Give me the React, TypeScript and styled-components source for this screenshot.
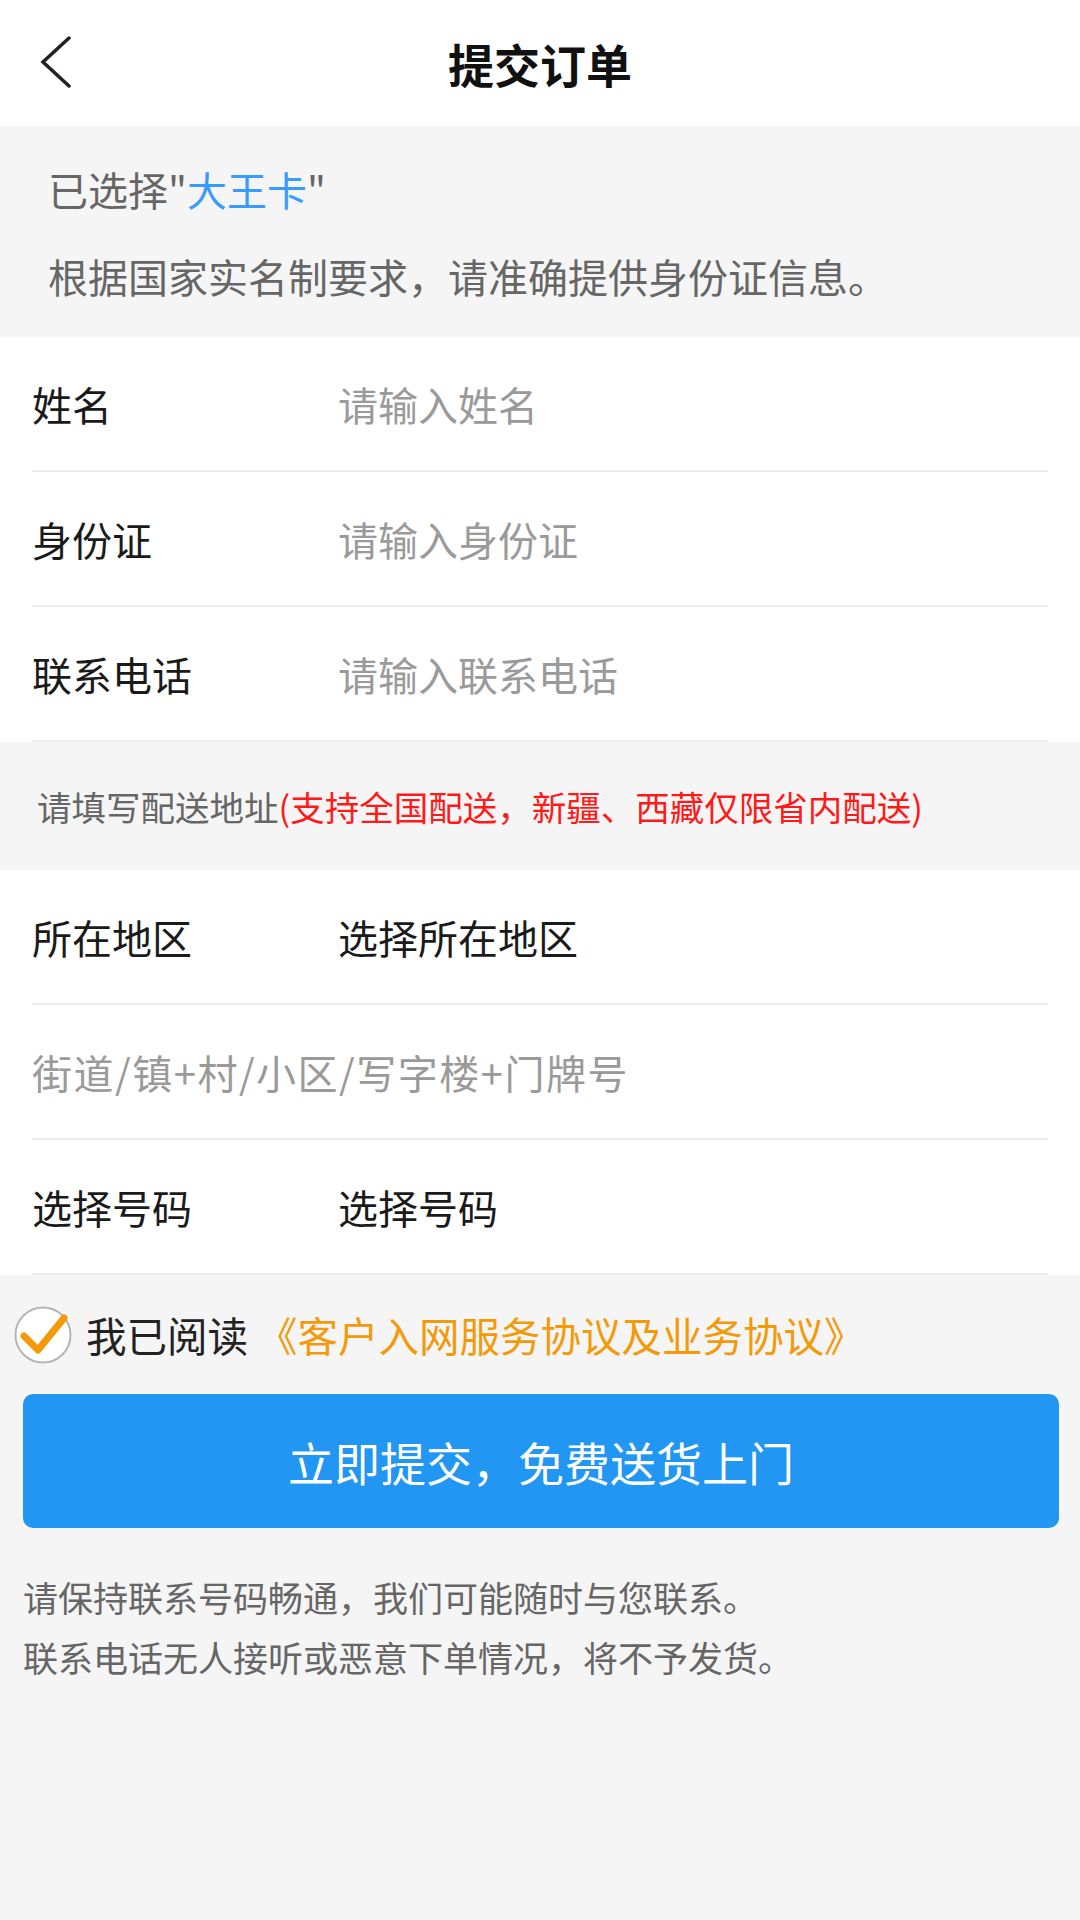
import React from "react";
import styled, { createGlobalStyle } from "styled-components";

const GlobalStyle = createGlobalStyle`
  html, body {
    margin: 0;
    padding: 0;
    background: #f5f5f5;
  }
  * { box-sizing: border-box; }
  body {
    font-family: "Noto Sans CJK SC", "Noto Sans", "Liberation Sans", sans-serif;
  }
`;

const Page = styled.div`
  width: 1080px;
  min-height: 1920px;
  background: #f5f5f5;
  display: flex;
  flex-direction: column;
`;

const Header = styled.header`
  height: 126px;
  background: #ffffff;
  display: grid;
  grid-template-columns: 1fr auto 1fr;
  align-items: center;
`;

const BackButton = styled.button`
  justify-self: start;
  margin-left: 36px;
  width: 40px;
  height: 60px;
  padding: 0;
  border: none;
  background: transparent;
  display: flex;
  align-items: center;
  justify-content: center;
  cursor: pointer;
`;

const Title = styled.h1`
  margin: 0;
  font-size: 46px;
  font-weight: 700;
  color: #111111;
  line-height: 1;
`;

const InfoBox = styled.section`
  padding: 20px 0 17px 48px;
  background: #f5f5f5;
`;

const InfoLine = styled.p`
  margin: 0;
  font-size: 40px;
  line-height: 87px;
  color: #666666;
  white-space: nowrap;
`;

const Highlight = styled.span`
  color: #3a9bff;
`;

const FormSection = styled.section`
  background: #ffffff;
  display: flex;
  flex-direction: column;
`;

const Row = styled.label`
  height: 135px;
  margin: 0 32px;
  border-bottom: 2px solid #ececec;
  display: flex;
  align-items: center;
`;

const Label = styled.span`
  width: 306px;
  flex-shrink: 0;
  font-size: 40px;
  color: #1a1a1a;
`;

const Field = styled.input<{ $spacing?: number }>`
  flex: 1;
  min-width: 0;
  border: none;
  outline: none;
  background: transparent;
  padding: 0;
  font-family: inherit;
  font-size: 40px;
  letter-spacing: ${(p) => p.$spacing ?? 0}px;
  color: #1a1a1a;
  &::placeholder {
    color: #9a9a9a;
  }
`;

const Value = styled.span`
  font-size: 40px;
  color: #1a1a1a;
`;

const Hint = styled.div`
  height: 128px;
  padding-left: 37px;
  display: flex;
  align-items: center;
  font-size: 34.5px;
  color: #666666;
  white-space: nowrap;
`;

const HintRed = styled.span`
  color: #ff1a1a;
`;

const Bottom = styled.section`
  padding: 30px 21px 0 14px;
  display: flex;
  flex-direction: column;
`;

const Agreement = styled.div`
  display: flex;
  align-items: center;
  gap: 14px;
  font-size: 40.5px;
  color: #222222;
  white-space: pre;
`;

const AgreementLink = styled.span`
  color: #f39a0b;
`;

const SubmitButton = styled.button`
  margin: 30px 0 0 9px;
  height: 134px;
  width: 1036px;
  border: none;
  border-radius: 10px;
  background: #2196f3;
  color: #ffffff;
  font-family: inherit;
  font-size: 46px;
  cursor: pointer;
`;

const Notes = styled.div`
  margin: 39px 0 0 9px;
`;

const Note = styled.p`
  margin: 0;
  font-size: 35px;
  line-height: 60px;
  color: #666666;
  white-space: nowrap;
`;

const CheckIcon = () => (
  <svg width="58" height="58" viewBox="0 0 58 58">
    <circle cx="29" cy="29" r="27.5" fill="#ffffff" stroke="#b5b5b5" strokeWidth="2" />
    <path
      d="M10 30 L24 44 L50 12"
      fill="none"
      stroke="#f39a0b"
      strokeWidth="7"
      strokeLinecap="round"
      strokeLinejoin="round"
    />
  </svg>
);

const BackIcon = () => (
  <svg width="34" height="54" viewBox="0 0 34 54">
    <polyline
      points="30,2 4,26 30,50"
      fill="none"
      stroke="#222222"
      strokeWidth="3.5"
      strokeLinecap="round"
      strokeLinejoin="miter"
    />
  </svg>
);

export default function App() {
  return (
    <Page>
      <GlobalStyle />
      <Header>
        <BackButton aria-label="返回">
          <BackIcon />
        </BackButton>
        <Title>提交订单</Title>
        <span />
      </Header>

      <InfoBox>
        <InfoLine>
          已选择"<Highlight>大王卡</Highlight>"
        </InfoLine>
        <InfoLine>根据国家实名制要求，请准确提供身份证信息。</InfoLine>
      </InfoBox>

      <FormSection>
        <Row>
          <Label>姓名</Label>
          <Field placeholder="请输入姓名" />
        </Row>
        <Row>
          <Label>身份证</Label>
          <Field placeholder="请输入身份证" />
        </Row>
        <Row>
          <Label>联系电话</Label>
          <Field placeholder="请输入联系电话" />
        </Row>
      </FormSection>

      <Hint>
        请填写配送地址<HintRed>(支持全国配送，新疆、西藏仅限省内配送)</HintRed>
      </Hint>

      <FormSection>
        <Row>
          <Label>所在地区</Label>
          <Value>选择所在地区</Value>
        </Row>
        <Row>
          <Field $spacing={1.5} placeholder="街道/镇+村/小区/写字楼+门牌号" />
        </Row>
        <Row>
          <Label>选择号码</Label>
          <Value>选择号码</Value>
        </Row>
      </FormSection>

      <Bottom>
        <Agreement>
          <CheckIcon />
          <span>
            我已阅读 <AgreementLink>《客户入网服务协议及业务协议》</AgreementLink>
          </span>
        </Agreement>
        <SubmitButton>立即提交，免费送货上门</SubmitButton>
        <Notes>
          <Note>请保持联系号码畅通，我们可能随时与您联系。</Note>
          <Note>联系电话无人接听或恶意下单情况，将不予发货。</Note>
        </Notes>
      </Bottom>
    </Page>
  );
}
